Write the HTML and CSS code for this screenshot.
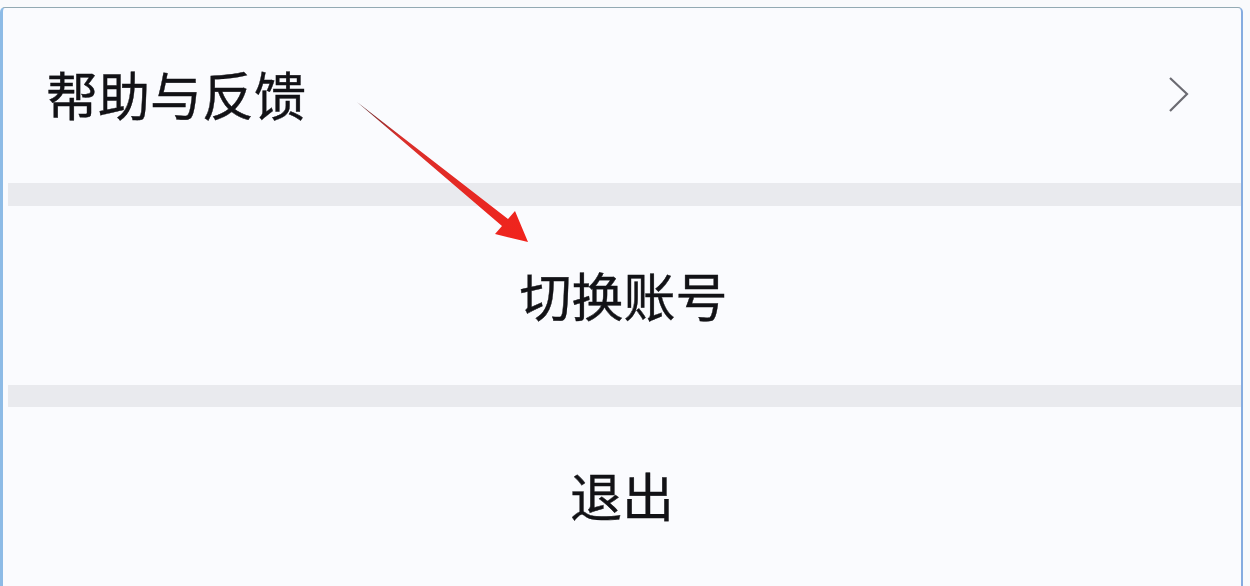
FILE: index.html
```
<!DOCTYPE html>
<html lang="zh-CN">
<head>
<meta charset="utf-8">
<title>设置</title>
<link rel="stylesheet" href="styles.css">
</head>
<body>
<div class="frame">
  <div class="row row-help">
    <span class="label">帮助与反馈</span>
    <svg class="chev" width="24" height="40" viewBox="0 0 24 40"><polyline points="3,3 20,19 3,36" fill="none" stroke="#6b6b72" stroke-width="2.2" stroke-linejoin="miter"/></svg>
  </div>
  <div class="band"></div>
  <div class="row row-center row-switch"><span class="label">切换账号</span></div>
  <div class="band band2"></div>
  <div class="row row-center row-exit"><span class="label">退出</span></div>
  <svg class="arrow" width="1250" height="586" viewBox="0 0 1250 586">
    <defs>
      <linearGradient id="g" x1="357" y1="102" x2="527" y2="241" gradientUnits="userSpaceOnUse">
        <stop offset="0" stop-color="#5a2a2e"/>
        <stop offset="0.25" stop-color="#d9302c"/>
        <stop offset="1" stop-color="#f1231c"/>
      </linearGradient>
    </defs>
    <polygon points="357,102 508,219 515,211 528,242 495,234 502,226" fill="url(#g)"/>
  </svg>
</div>
</body>
</html>
```
FILE: styles.css
```
html, body {
  margin: 0;
  padding: 0;
  background: #f9fafc;
}
body {
  width: 1250px;
  height: 586px;
  overflow: hidden;
  font-family: "Noto Sans CJK SC", "Noto Sans", sans-serif;
}
.frame {
  position: relative;
  margin: 7px 0 0 0;
  width: 1238px;
  height: 579px;
  border-top: 1px solid #93aab3;
  border-left: 3px solid #8dbbe6;
  border-right: 2px solid #86ace0;
  border-radius: 5px 5px 0 0;
  background: #fafbfe;
  overflow: hidden;
}
.row {
  display: flex;
  align-items: center;
  color: #121216;
  font-size: 52px;
  font-weight: 400;
  line-height: 1;
  -webkit-text-stroke: 0.4px #121216;
}
.row-help {
  height: 175px;
  padding: 0 50px 0 43px;
  justify-content: space-between;
}
.row-help .label { margin-top: -4px; }
.chev { margin-top: -2px; }
.band {
  height: 23px;
  margin-left: 5px;
  background: #e9eaee;
}
.band2 { height: 22px; }
.row-center { justify-content: center; }
.row-switch { height: 179px; }
.row-switch .label { margin-left: 3px; margin-top: -2px; }
.row-exit { height: 180px; align-items: flex-start; }
.row-exit .label { margin-top: 62px; margin-left: 0; }
.arrow {
  position: absolute;
  left: -3px;
  top: -8px;
  pointer-events: none;
}
```
